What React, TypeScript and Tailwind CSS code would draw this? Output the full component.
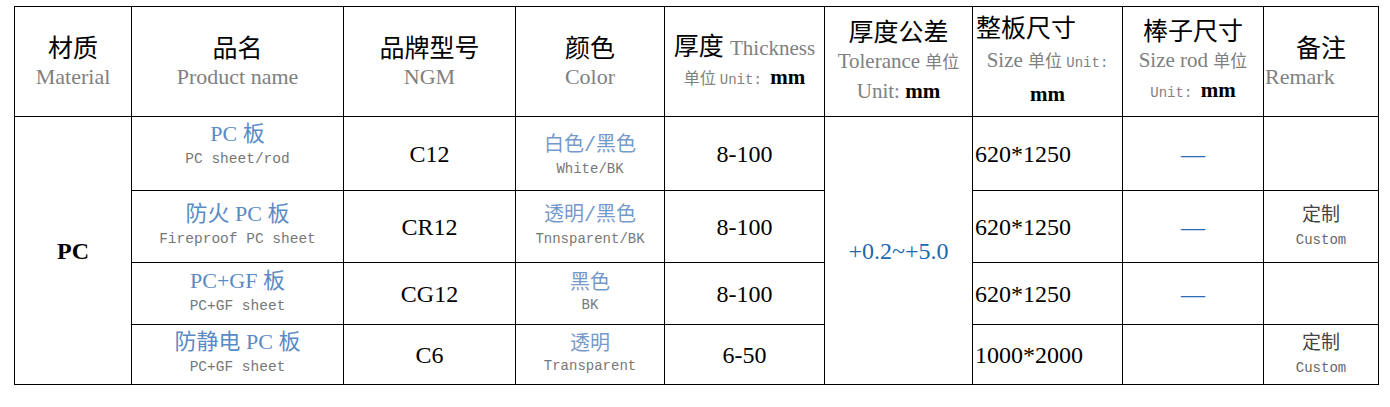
// PC 材料规格表
const serif = "font-['Liberation_Serif','Noto_Sans_CJK_SC',serif]";
const mono = "font-['Liberation_Mono','Noto_Sans_CJK_SC',monospace]";

const td = "border border-black p-0 align-middle";

type Row = {
  h: string;
  cn: React.ReactNode;
  en: string;
  ngm: string;
  color: React.ReactNode;
  colorEn: string;
  thick: string;
  size: string;
  rod: boolean;
  remark: boolean;
  namePad: string;
  colorPad: string;
};

const Slash = () => <span className={mono}>/</span>;

const rows: Row[] = [
  { h: "h-[74px]", cn: "PC 板", en: "PC sheet/rod", ngm: "C12", color: <>白色<Slash />黑色</>, colorEn: "White/BK", thick: "8-100", size: "620*1250", rod: true, remark: false, namePad: "pb-[14px]", colorPad: "pt-[6px]" },
  { h: "h-[72px]", cn: "防火 PC 板", en: "Fireproof PC sheet", ngm: "CR12", color: <>透明<Slash />黑色</>, colorEn: "Tnnsparent/BK", thick: "8-100", size: "620*1250", rod: true, remark: true, namePad: "", colorPad: "" },
  { h: "h-[62px]", cn: "PC+GF 板", en: "PC+GF sheet", ngm: "CG12", color: "黑色", colorEn: "BK", thick: "8-100", size: "620*1250", rod: true, remark: false, namePad: "", colorPad: "" },
  { h: "h-[60px]", cn: "防静电 PC 板", en: "PC+GF sheet", ngm: "C6", color: "透明", colorEn: "Transparent", thick: "6-50", size: "1000*2000", rod: false, remark: true, namePad: "", colorPad: "" },
];

export default function App() {
  return (
    <div className={`min-h-screen bg-white pl-[14px] pt-[6px] ${serif}`}>
      <table className="table-fixed border-collapse border border-black w-[1364px]">
        <colgroup>
          <col className="w-[117px]" />
          <col className="w-[212px]" />
          <col className="w-[172px]" />
          <col className="w-[149px]" />
          <col className="w-[160px]" />
          <col className="w-[148px]" />
          <col className="w-[150px]" />
          <col className="w-[141px]" />
          <col className="w-[115px]" />
        </colgroup>
        <tbody>
          {/* 表头 */}
          <tr className="h-[110px]">
            <td className={`${td} text-center`}>
              <div className="text-[25px] leading-[30px] text-black">材质</div>
              <div className="text-[22px] leading-[26px] text-[#808080]">Material</div>
            </td>
            <td className={`${td} text-center`}>
              <div className="text-[25px] leading-[30px] text-black">品名</div>
              <div className="text-[22px] leading-[26px] text-[#808080]">Product name</div>
            </td>
            <td className={`${td} text-center`}>
              <div className="text-[25px] leading-[30px] text-black">品牌型号</div>
              <div className="text-[22px] leading-[26px] text-[#808080]">NGM</div>
            </td>
            <td className={`${td} text-center`}>
              <div className="text-[25px] leading-[30px] text-black">颜色</div>
              <div className="text-[22px] leading-[26px] text-[#808080]">Color</div>
            </td>
            <td className={`${td} text-center whitespace-nowrap`}>
              <div className="text-[25px] leading-[30px] text-black pt-[3px]">
                厚度 <span className="text-[21px] text-[#808080]">Thickness</span>
              </div>
              <div className="leading-[28px] text-[#808080]">
                <span className="text-[16px]">单位 </span>
                <span className={`${mono} text-[14px]`}>Unit: </span>
                <span className="text-[21px] font-bold text-black">mm</span>
              </div>
            </td>
            <td className={`${td} text-center whitespace-nowrap`}>
              <div className="text-[25px] leading-[29px] text-black">厚度公差</div>
              <div className="text-[21px] leading-[28px] text-[#808080]">
                Tolerance <span className="text-[17px]">单位</span>
              </div>
              <div className="text-[21px] leading-[28px] text-[#808080]">
                Unit: <span className="font-bold text-black">mm</span>
              </div>
            </td>
            <td className={`${td} whitespace-nowrap`}>
              <div className="text-[25px] leading-[30px] text-black pl-[3px]">整板尺寸</div>
              <div className="text-center leading-[32px] text-[#808080]">
                <span className="text-[21px]">Size </span>
                <span className="text-[17px]">单位 </span>
                <span className={`${mono} text-[14px]`}>Unit:</span>
              </div>
              <div className="text-center text-[21px] leading-[30px] font-bold text-black">mm</div>
            </td>
            <td className={`${td} text-center whitespace-nowrap`}>
              <div className="text-[25px] leading-[29px] text-black">棒子尺寸</div>
              <div className="leading-[29px] text-[#808080]">
                <span className="text-[21px]">Size rod </span>
                <span className="text-[17px]">单位</span>
              </div>
              <div className="leading-[28px] text-[#808080]">
                <span className={`${mono} text-[14px]`}>Unit: </span>
                <span className="text-[21px] font-bold text-black">mm</span>
              </div>
            </td>
            <td className={`${td}`}>
              <div className="text-center text-[25px] leading-[30px] text-black">备注</div>
              <div className="text-[22px] leading-[26px] text-[#808080] pl-[1px]">Remark</div>
            </td>
          </tr>

          {/* 数据行 */}
          {rows.map((r, i) => (
            <tr key={i} className={r.h}>
              {i === 0 && (
                <td rowSpan={4} className={`${td} text-center text-[24px] font-bold text-black`}>
                  PC
                </td>
              )}
              <td className={`${td} text-center ${r.namePad}`}>
                <div className="text-[22px] leading-[25px] text-[#5b8ac4]">{r.cn}</div>
                <div className={`${mono} text-[14.5px] leading-[26px] text-[#777]`}>{r.en}</div>
              </td>
              <td className={`${td} text-center text-[24px] text-black`}>{r.ngm}</td>
              <td className={`${td} text-center ${r.colorPad}`}>
                <div className="text-[20px] leading-[22px] text-[#7699cb]">{r.color}</div>
                <div className={`${mono} text-[14px] leading-[24px] text-[#777]`}>{r.colorEn}</div>
              </td>
              <td className={`${td} text-center text-[24px] text-black`}>{r.thick}</td>
              {i === 0 && (
                <td rowSpan={4} className={`${td} text-center text-[24px] text-[#2068b0]`}>
                  +0.2~+5.0
                </td>
              )}
              <td className={`${td} pl-[2px] text-[24px] text-black`}>{r.size}</td>
              <td className={`${td} text-center text-[24px] text-[#2a6db5]`}>{r.rod ? "—" : ""}</td>
              <td className={`${td} text-center`}>
                {r.remark && (
                  <>
                    <div className="text-[19px] leading-[26px] text-[#444]">定制</div>
                    <div className={`${mono} text-[14px] leading-[24px] text-[#666]`}>Custom</div>
                  </>
                )}
              </td>
            </tr>
          ))}
        </tbody>
      </table>
    </div>
  );
}
